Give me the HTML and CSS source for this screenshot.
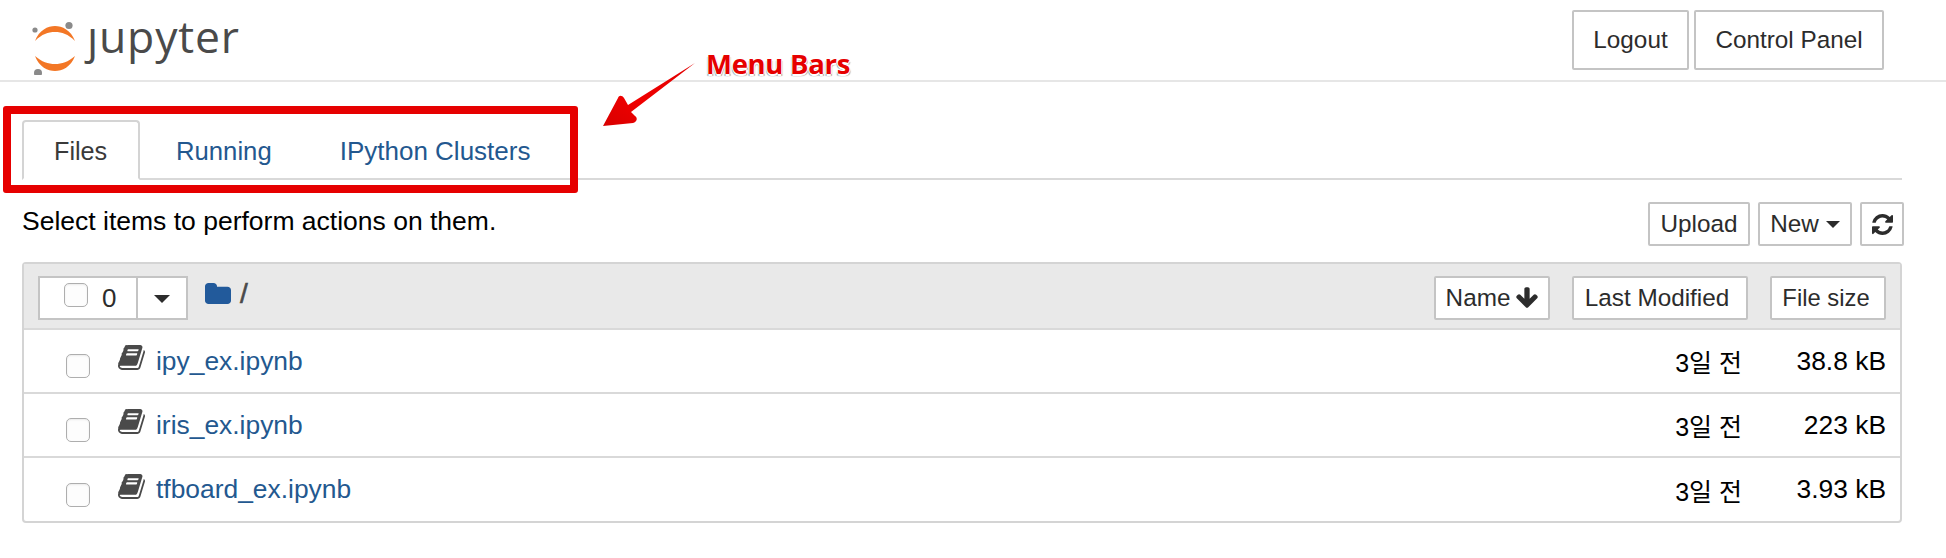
FILE: index.html
```html
<!DOCTYPE html>
<html lang="ko">
<head>
<meta charset="utf-8">
<title>Jupyter</title>
<link rel="stylesheet" href="styles.css">
</head>
<body>
<svg class="sprite" width="0" height="0">
  <symbol id="book" viewBox="64 128 1664 1536">
    <path d="M1703 478q40 57 18 129l-275 906q-19 64-76.500 107.500t-122.500 43.500h-923q-77 0-148.500-53.500t-99.500-131.500q-24-67-2-127 0-4 3-27t4-37q1-8-3-21.500t-3-19.500q2-11 8-21t16.500-23.500 16.500-23.500q23-38 45-91.500t30-91.500q3-10 .5-30t-.5-28q3-11 17-28t17-23q21-36 42-92t25-90q1-9-2.500-32t.5-28q4-13 22-30.500t22-22.500q19-26 42.500-84.500t27.500-96.500q1-8-3-25.500t-2-26.500q2-8 9-18t18-23 17-21q8-12 16.500-30.500t15-35 16-36 19.500-32 26.500-23.500 36-11.500 47.500 5.500l-1 3q38-9 51-9h761q74 0 114 56t18 130l-274 906q-36 119-71.500 153.500t-128.500 34.500h-869q-27 0-38 15-11 16-1 43 24 70 144 70h923q29 0 56-15.500t35-41.500l300-987q7-22 5-57 38 15 59 43zm-1064 2q-4 13 2 22.500t20 9.500h608q13 0 25.500-9.500t16.500-22.500l21-64q4-13-2-22.500t-20-9.500h-608q-13 0-25.500 9.500t-16.500 22.500zm-83 256q-4 13 2 22.500t20 9.500h608q13 0 25.500-9.500t16.500-22.500l21-64q4-13-2-22.500t-20-9.500h-608q-13 0-25.500 9.500t-16.500 22.500z"/>
  </symbol>
</svg>

<header class="topbar">
  <div class="logo">
    <svg class="logo-mark" width="50" height="56" viewBox="0 0 50 56">
      <path class="orange" d="M4 22C8 11 17 7 24 7C31 7 40 11 44 22C37 15 31 13 24 13C17 13 11 15 4 22Z"/>
      <path class="orange" d="M4 37C11 43 17 45 24 45C31 45 37 43 44 37C40 48 31 52 24 52C17 52 8 48 4 37Z"/>
      <circle class="moon" cx="4" cy="11" r="2.600"/>
      <circle class="moon" cx="38" cy="6.500" r="3.600"/>
      <circle class="moon" cx="7" cy="54" r="4"/>
    </svg>
    <span class="logo-text">ȷupyter</span>
  </div>
  <div class="top-actions">
    <button class="btn btn-top">Logout</button>
    <button class="btn btn-top">Control Panel</button>
  </div>
</header>

<main class="page">
  <nav class="tabs">
    <a class="tab tab-active">Files</a>
    <a class="tab tab-running">Running</a>
    <a class="tab tab-clusters">IPython Clusters</a>
  </nav>

  <div class="toolbar">
    <span class="hint">Select items to perform actions on them.</span>
    <div class="toolbar-actions">
      <button class="btn btn-tool">Upload</button>
      <button class="btn btn-tool">New <i class="caret"></i></button>
      <button class="btn btn-icon" aria-label="Refresh">
        <svg width="21" height="21" viewBox="128 128 1536 1536">
          <path class="dark" d="M1639 1056q0 5-1 7-64 268-268 434.500t-478 166.500q-146 0-282.500-55t-243.500-157l-129 129q-19 19-45 19t-45-19-19-45v-448q0-26 19-45t45-19h448q26 0 45 19t19 45-19 45l-137 137q71 66 161 102t187 36q134 0 250-65t186-179q11-17 53-117 8-23 30-23h192q13 0 22.500 9.500t9.500 22.500zm25-800v448q0 26-19 45t-45 19h-448q-26 0-45-19t-19-45 19-45l138-138q-148-137-349-137-134 0-250 65t-186 179q-11 17-53 117-8 23-30 23h-199q-13 0-22.500-9.500t-9.500-22.500v-7q65-268 270-434.500t480-166.500q146 0 284 55.500t245 156.500l130-129q19-19 45-19t45 19 19 45z"/>
        </svg>
      </button>
    </div>
  </div>

  <section class="panel">
    <div class="panel-head">
      <div class="select-box">
        <div class="select-main"><span class="check check-head"></span><span class="count">0</span></div>
        <div class="select-drop"><i class="caret caret-large"></i></div>
      </div>
      <svg class="folder" width="26" height="21" viewBox="64 128 1664 1408" preserveAspectRatio="none">
        <path class="blue" d="M1728 608v704q0 92-66 158t-158 66h-1216q-92 0-158-66t-66-158v-960q0-92 66-158t158-66h320q92 0 158 66t66 158v32h672q92 0 158 66t66 158z"/>
      </svg>
      <span class="slash">/</span>
      <div class="sorts">
        <button class="btn btn-sort btn-name">Name
          <svg width="22" height="22" viewBox="96 160 1600 1500"><path class="dark" d="M1675 832q0 53-37 90l-651 652q-39 37-91 37-53 0-90-37l-651-652q-38-36-38-90 0-53 38-91l74-75q39-37 91-37 53 0 90 37l294 294v-704q0-52 38-90t90-38h128q52 0 90 38t38 90v704l294-294q37-37 90-37 52 0 91 37l75 75q37 39 37 91z"/></svg>
        </button>
        <button class="btn btn-sort btn-modified">Last Modified</button>
        <button class="btn btn-sort btn-size">File size</button>
      </div>
    </div>

    <div class="row">
      <span class="check"></span>
      <svg class="book" width="27" height="25"><use href="#book"/></svg>
      <a class="name">ipy_ex.ipynb</a>
      <span class="date">3일 전</span>
      <span class="size">38.8 kB</span>
    </div>
    <div class="row">
      <span class="check"></span>
      <svg class="book" width="27" height="25"><use href="#book"/></svg>
      <a class="name">iris_ex.ipynb</a>
      <span class="date">3일 전</span>
      <span class="size">223 kB</span>
    </div>
    <div class="row">
      <span class="check"></span>
      <svg class="book" width="27" height="25"><use href="#book"/></svg>
      <a class="name">tfboard_ex.ipynb</a>
      <span class="date">3일 전</span>
      <span class="size">3.93 kB</span>
    </div>
  </section>
</main>

<div class="callout-box"></div>
<svg class="callout-arrow" width="110" height="80" viewBox="0 0 110 80">
  <defs>
    <linearGradient id="arrowFill" x1="0" y1="1" x2="1" y2="0">
      <stop offset="0" stop-color="#d80000"/>
      <stop offset="0.4" stop-color="#f00000"/>
      <stop offset="1" stop-color="#e00000"/>
    </linearGradient>
  </defs>
  <path fill="url(#arrowFill)" d="M100 3L33 45L29 38C27 35 24 35 23 38L8 66L38 63C42 62 43 58 40 56L36 52Z"/>
</svg>
<span class="callout-label">Menu Bars</span>
</body>
</html>
```

FILE: styles.css
```css
* { box-sizing: border-box; }

html, body { margin: 0; padding: 0; background: #fff; }

body {
  position: relative;
  width: 1946px;
  height: 558px;
  overflow: hidden;
  font-family: "Liberation Sans", "Noto Sans CJK KR", sans-serif;
  color: #000;
}

.sprite { position: absolute; }

.topbar {
  display: flex;
  justify-content: space-between;
  height: 82px;
  padding: 10px 62px 0 33px;
  border-bottom: 2px solid #e6e6e6;
}

.logo { display: flex; align-items: flex-start; }
.logo-mark { margin-top: 9px; margin-left: -2px; }
.orange { fill: #f37726; }
.moon { fill: #8a8a8a; }
.logo-text {
  margin-left: 6px;
  margin-top: -1px;
  font-family: "Open Sans", "Noto Sans", sans-serif;
  font-size: 44.500px;
  line-height: 54px;
  letter-spacing: 0.800px;
  color: #4a4a4a;
}

.top-actions { display: flex; gap: 5px; }

.btn {
  display: inline-flex;
  align-items: center;
  justify-content: center;
  margin: 0;
  padding: 0;
  background: #fff;
  border: 2px solid #c4c4c4;
  border-radius: 2px;
  font-family: inherit;
  font-size: 24.300px;
  color: #2c2c2c;
}

.btn-top { height: 60px; }
.btn-top:first-child { width: 117px; }
.btn-top:last-child { width: 190px; }

.page { padding: 0 44px 0 22px; }

.tabs {
  display: flex;
  align-items: flex-end;
  height: 98px;
  border-bottom: 2px solid #d9d9d9;
}

.tab {
  display: flex;
  align-items: center;
  height: 60px;
  padding: 3px 0 0 0;
  font-size: 26px;
  color: #23588f;
  margin-bottom: -2px;
}

.tab-active {
  width: 118px;
  padding: 3px 0 0 30px;
  background: #fff;
  border: 2px solid #d4d4d4;
  border-bottom-color: #fff;
  border-radius: 4px 4px 0 0;
  font-size: 25.200px;
  color: #3a3a3a;
}

.tab-running { margin-left: 36px; font-size: 25.700px; }
.tab-clusters { margin-left: 68px; }

.toolbar {
  display: flex;
  justify-content: space-between;
  align-items: flex-start;
  height: 82px;
  padding-top: 22px;
  margin-right: -2px;
}

.hint { font-size: 26.500px; line-height: 40px; margin-top: -1px; }

.toolbar-actions { display: flex; gap: 8px; }
.btn-tool, .btn-icon { height: 44px; }
.btn-tool:first-child { width: 102px; }
.btn-tool:nth-child(2) { width: 94px; gap: 7px; }
.btn-icon { width: 44px; }

.caret {
  display: inline-block;
  width: 0;
  height: 0;
  border-left: 7.500px solid transparent;
  border-right: 7.500px solid transparent;
  border-top: 7.500px solid #2c2c2c;
}
.caret-large {
  border-left-width: 8px;
  border-right-width: 8px;
  border-top-width: 8px;
}

.dark { fill: #2c2c2c; }
.blue { fill: #225a9b; }

.panel {
  border: 2px solid #d4d4d4;
  border-radius: 4px;
}

.panel-head {
  display: flex;
  align-items: flex-start;
  height: 66px;
  padding: 12px 14px 0 14px;
  background: #e9e9e9;
  border-bottom: 2px solid #d9d9d9;
}

.select-box {
  display: flex;
  width: 150px;
  height: 44px;
  background: #fff;
  border: 2px solid #c4c4c4;
}
.select-main {
  display: flex;
  align-items: center;
  width: 98px;
  padding-left: 24px;
  border-right: 2px solid #c4c4c4;
}
.select-drop {
  flex: 1;
  display: flex;
  align-items: center;
  justify-content: center;
  padding-top: 2px;
}

.check {
  flex: none;
  display: block;
  width: 24px;
  height: 24px;
  background: #fdfdfd;
  border: 1.500px solid #aeaeae;
  border-radius: 5px;
  box-shadow: inset 0 1px 2px rgba(0, 0, 0, 0.08);
}
.check-head { margin-top: -7px; }

.count {
  margin-left: 14px;
  font-size: 26px;
  color: #2c2c2c;
  margin-top: 0;
}

.folder { margin: 7px 0 0 17px; }
.slash {
  margin-left: 9px;
  margin-top: 3px;
  font-size: 28px;
  -webkit-text-stroke: 0.600px #4a4a4a;
  line-height: 30px;
  color: #4a4a4a;
}

.sorts {
  display: flex;
  margin-left: auto;
}
.btn-sort { height: 44px; }
.btn-name { width: 116px; gap: 6px; margin-right: 22px; }
.btn-modified { width: 176px; padding-right: 6px; margin-right: 22px; }
.btn-size { width: 116px; padding-right: 4px; font-size: 23.800px; }

.row {
  display: flex;
  align-items: center;
  height: 64px;
  padding-right: 14px;
  font-size: 26.400px;
  border-bottom: 2px solid #d9d9d9;
}
.row:last-child { border-bottom: 0; height: 63px; }
.row .check { margin: 10px 0 0 42px; }
.book { margin: -7px 0 0 28px; flex: none; fill: #4a4a4a; }

.name { margin-left: 11px; color: #23588f; }
.date { margin-left: auto; width: 90px; text-align: right; font-size: 25px; }
.size { width: 144px; text-align: right; }

.callout-box {
  position: absolute;
  left: 3px;
  top: 106px;
  width: 575px;
  height: 87px;
  border: 8px solid #e60000;
  border-radius: 3px;
}

.callout-arrow {
  position: absolute;
  left: 595px;
  top: 60px;
}

.callout-label {
  position: absolute;
  left: 706px;
  top: 45px;
  font-family: "Open Sans", sans-serif;
  font-weight: 700;
  font-size: 27.500px;
  letter-spacing: -0.300px;
  line-height: 38px;
  color: #e60000;
  text-shadow: 1px 0 0 #fff, -1px 0 0 #fff, 0 -1px 0 #fff, 0 2px 0 #fff, 1px 2px 1px #999, -1px 2px 1px #999;
}
```
